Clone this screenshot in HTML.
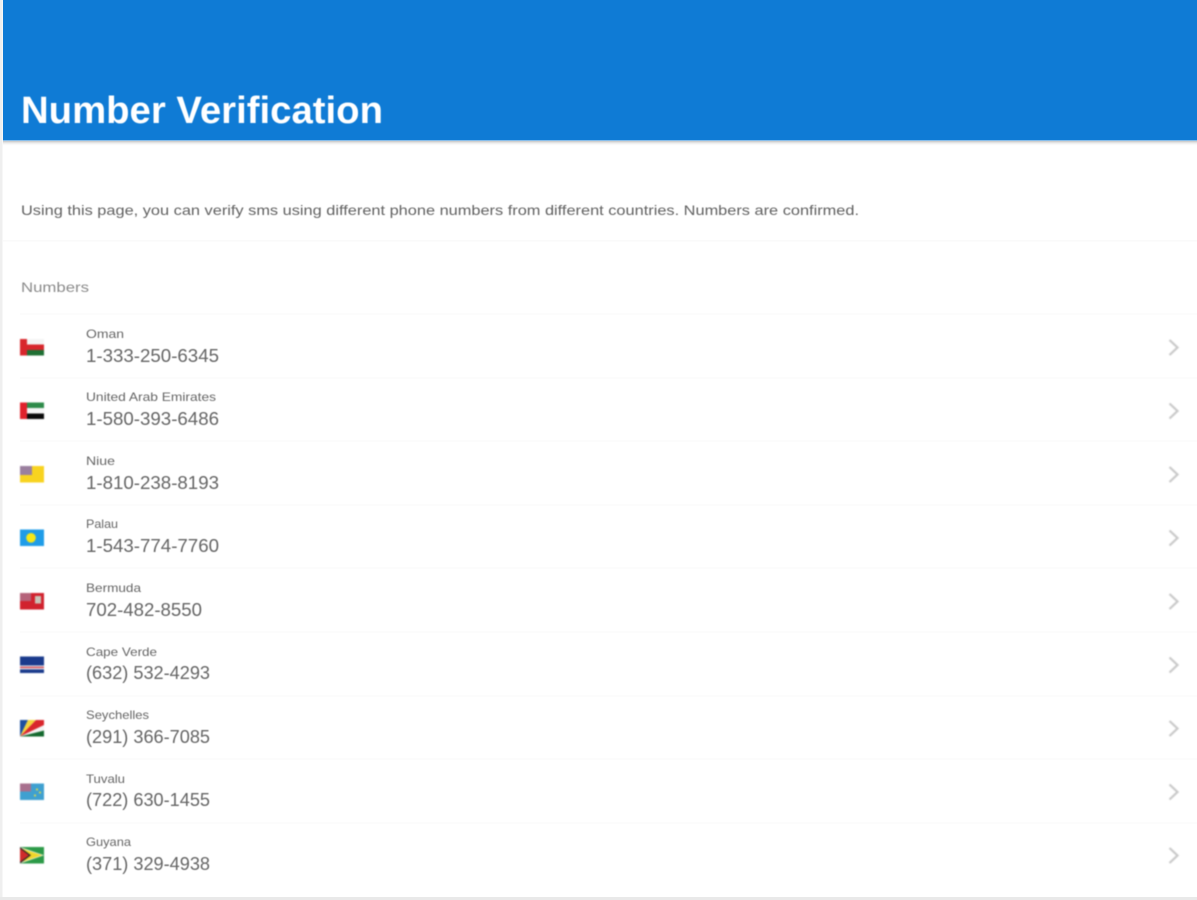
<!DOCTYPE html>
<html><head><meta charset="utf-8"><style>
html,body{margin:0;padding:0;background:#fff;width:1197px;height:900px;overflow:hidden}
svg{display:block;position:absolute;left:0;top:0}
text{font-family:"Liberation Sans",sans-serif}
.blur{filter:blur(.55px)}
.flags{filter:blur(.75px)}
.chev{filter:blur(.8px)}
.c{font-size:12px;fill:#666}
.n{font-size:18px;fill:#666}
</style></head><body>
<svg width="1197" height="900" viewBox="0 0 1197 900" xmlns="http://www.w3.org/2000/svg">
<defs><linearGradient id="sh" x1="0" y1="0" x2="0" y2="1"><stop offset="0" stop-color="#aaa" stop-opacity=".7"/><stop offset="1" stop-color="#fff" stop-opacity="0"/></linearGradient></defs>
<rect x="0" y="0" width="2.500" height="900" fill="#efefef"/>
<rect x="0" y="897" width="1197" height="3" fill="#e9e9e9"/>
<rect x="3" y="141" width="1194" height="5" fill="url(#sh)"/>
<rect x="3" y="0" width="1194" height="140.500" fill="#0f7bd5"/>
<g fill="#fafafa">
<rect x="3" y="240" width="1194" height="1.500"/>
<rect x="20" y="313.500" width="1177" height="1"/><rect x="20" y="377.500" width="1177" height="1"/><rect x="20" y="440.500" width="1177" height="1"/><rect x="20" y="504.500" width="1177" height="1"/><rect x="20" y="567.500" width="1177" height="1"/><rect x="20" y="631.500" width="1177" height="1"/><rect x="20" y="695.500" width="1177" height="1"/><rect x="20" y="758.500" width="1177" height="1"/><rect x="20" y="822.500" width="1177" height="1"/>
</g>
<g class="blur">
<text x="21" y="123" font-size="38" font-weight="700" fill="#fff" textLength="362" lengthAdjust="spacingAndGlyphs">Number Verification</text>
<text x="21" y="215" font-size="14" fill="#626262" textLength="838" lengthAdjust="spacingAndGlyphs">Using this page, you can verify sms using different phone numbers from different countries. Numbers are confirmed.</text>
<text x="21" y="292" font-size="14" fill="#8c8c8c" textLength="68" lengthAdjust="spacingAndGlyphs">Numbers</text>

<text class="c" x="86" y="338" textLength="38" lengthAdjust="spacingAndGlyphs">Oman</text>
<text class="n" x="86" y="362" textLength="133" lengthAdjust="spacingAndGlyphs">1-333-250-6345</text>
<text class="c" x="86" y="401" textLength="130" lengthAdjust="spacingAndGlyphs">United Arab Emirates</text>
<text class="n" x="86" y="425" textLength="133" lengthAdjust="spacingAndGlyphs">1-580-393-6486</text>
<text class="c" x="86" y="465" textLength="29" lengthAdjust="spacingAndGlyphs">Niue</text>
<text class="n" x="86" y="489" textLength="133" lengthAdjust="spacingAndGlyphs">1-810-238-8193</text>
<text class="c" x="86" y="528" textLength="32" lengthAdjust="spacingAndGlyphs">Palau</text>
<text class="n" x="86" y="552" textLength="133" lengthAdjust="spacingAndGlyphs">1-543-774-7760</text>
<text class="c" x="86" y="592" textLength="55" lengthAdjust="spacingAndGlyphs">Bermuda</text>
<text class="n" x="86" y="616" textLength="116" lengthAdjust="spacingAndGlyphs">702-482-8550</text>
<text class="c" x="86" y="656" textLength="71" lengthAdjust="spacingAndGlyphs">Cape Verde</text>
<text class="n" x="86" y="679" textLength="124" lengthAdjust="spacingAndGlyphs">(632) 532-4293</text>
<text class="c" x="86" y="719" textLength="63" lengthAdjust="spacingAndGlyphs">Seychelles</text>
<text class="n" x="86" y="743" textLength="124" lengthAdjust="spacingAndGlyphs">(291) 366-7085</text>
<text class="c" x="86" y="783" textLength="39" lengthAdjust="spacingAndGlyphs">Tuvalu</text>
<text class="n" x="86" y="806" textLength="124" lengthAdjust="spacingAndGlyphs">(722) 630-1455</text>
<text class="c" x="86" y="846" textLength="45" lengthAdjust="spacingAndGlyphs">Guyana</text>
<text class="n" x="86" y="870" textLength="124" lengthAdjust="spacingAndGlyphs">(371) 329-4938</text>
</g>
<g class="flags">
<!-- Oman -->
<g transform="translate(20,339)"><rect width="24" height="5.500" fill="#f4f4f4"/><rect y="5.500" width="24" height="5.500" fill="#d8262c"/><rect y="11" width="24" height="5.500" fill="#1f7034"/><rect width="7" height="16.500" fill="#d8262c"/></g>
<!-- UAE -->
<g transform="translate(20,402.500)"><rect width="24" height="5.500" fill="#2e8b4a"/><rect y="5.500" width="24" height="5.500" fill="#f6f6f6"/><rect y="11" width="24" height="5.500" fill="#0a0a0a"/><rect width="7" height="16.500" fill="#e0212b"/></g>
<!-- Niue -->
<g transform="translate(20,466)"><rect width="24" height="16.500" fill="#f8d320"/><rect width="12" height="9" fill="#9a7f9e"/></g>
<!-- Palau -->
<g transform="translate(20,529.500)"><rect width="24" height="16.500" fill="#1f9ce8"/><circle cx="11" cy="8.300" r="4.800" fill="#f6e818"/></g>
<!-- Bermuda -->
<g transform="translate(20,593)"><rect width="24" height="16.500" fill="#d1222e"/><rect width="11" height="8" fill="#b5627a"/><rect x="15" y="3" width="6" height="7.500" fill="#c9c4b8"/></g>
<!-- Cape Verde -->
<g transform="translate(20,656.500)"><rect width="24" height="16.500" fill="#1a3a8c"/><rect y="9" width="24" height="1.300" fill="#f2f2f2"/><rect y="10.300" width="24" height="1.200" fill="#d8323a"/><rect y="11.500" width="24" height="1.300" fill="#f2f2f2"/></g>
<!-- Seychelles -->
<g transform="translate(20,720)"><rect width="24" height="16.500" fill="#f4f4f4"/><polygon points="0,16.500 0,0 8,0" fill="#1d4fa0"/><polygon points="0,16.500 8,0 16,0" fill="#f4d53c"/><polygon points="0,16.500 16,0 24,0 24,5" fill="#d9262c"/><polygon points="0,16.500 24,10.500 24,16.500" fill="#14692e"/></g>
<!-- Tuvalu -->
<g transform="translate(20,783.500)"><rect width="24" height="16.500" fill="#3fa0d0"/><rect width="11" height="8" fill="#a8708e"/><circle cx="17" cy="6" r="1" fill="#f2e23a"/><circle cx="20" cy="9" r="1" fill="#f2e23a"/><circle cx="15" cy="12" r="1" fill="#f2e23a"/></g>
<!-- Guyana -->
<g transform="translate(20,847)"><rect width="24" height="16.500" fill="#2c9a48"/><polygon points="0,0 24,8.250 0,16.500" fill="#f6f0e0"/><polygon points="0,1 22,8.250 0,15.500" fill="#f1d62a"/><polygon points="0,0 11,8.250 0,16.500" fill="#222"/><polygon points="0,1.500 9,8.250 0,15" fill="#cf2a2a"/></g>
</g>
<g class="chev" fill="none" stroke="#c8c8c8" stroke-width="2.200">
<path d="M1169.500 340l8 7.500-8 7.500"/>
<path d="M1169.500 403.500l8 7.500-8 7.500"/>
<path d="M1169.500 467l8 7.500-8 7.500"/>
<path d="M1169.500 530.500l8 7.500-8 7.500"/>
<path d="M1169.500 594l8 7.500-8 7.500"/>
<path d="M1169.500 657.500l8 7.500-8 7.500"/>
<path d="M1169.500 721l8 7.500-8 7.500"/>
<path d="M1169.500 784.500l8 7.500-8 7.500"/>
<path d="M1169.500 848l8 7.500-8 7.500"/>
</g>
</svg>
</body></html>
